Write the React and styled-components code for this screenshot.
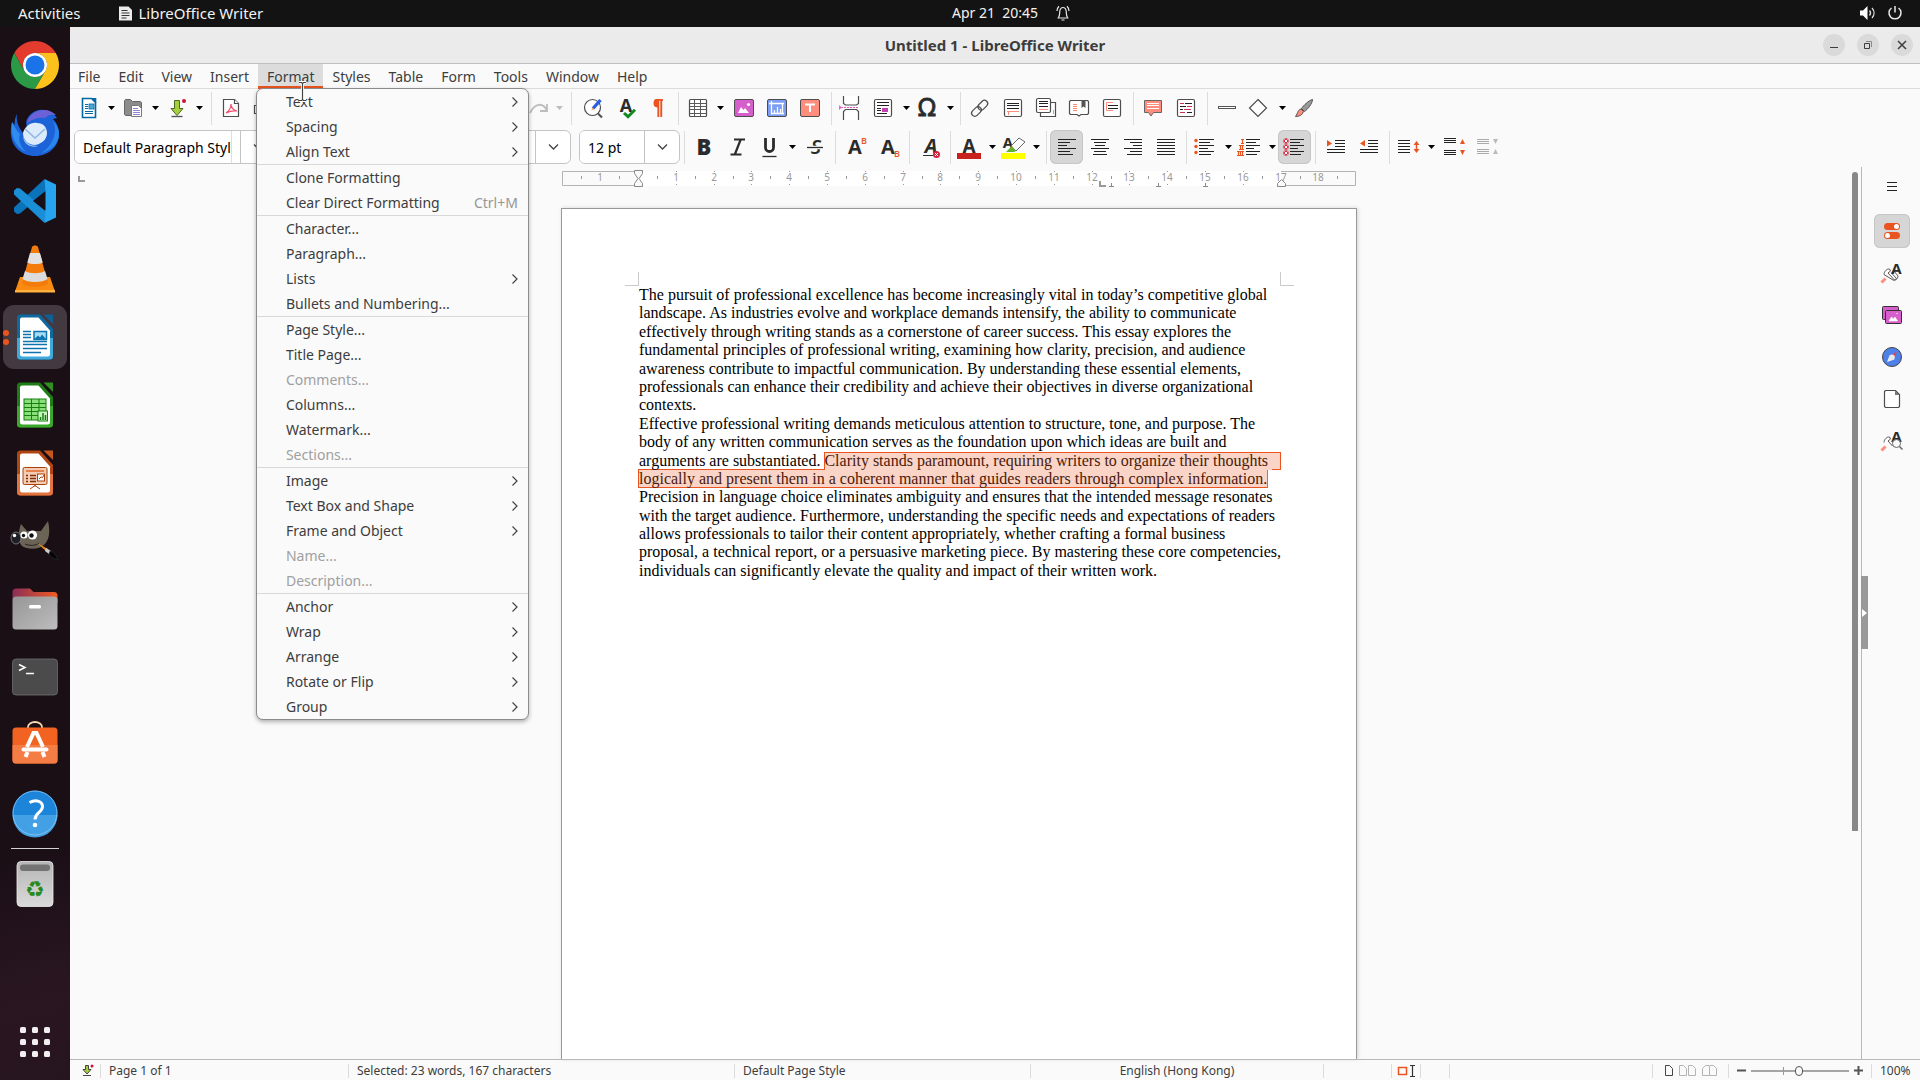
import React from "react";
import styled, { createGlobalStyle, css } from "styled-components";

const UI = `"Noto Sans", "Open Sans", "DejaVu Sans", sans-serif`;
const INK = "#3d3d3d";
const ORANGE = "#e95420";

const Global = createGlobalStyle`
  * { box-sizing: border-box; }
  html, body { margin: 0; height: 100%; }
  body { overflow: hidden; font-family: ${UI}; color: ${INK}; font-size: 14px; }
  button { font: inherit; color: inherit; border: 0; padding: 0; margin: 0; background: none; }
  svg { display: block; flex: none; overflow: visible; }
`;

const Desktop = styled.div`
  height: 100vh;
  display: flex;
  flex-direction: column;
  background: #fafafa;
`;

/* ---------- top panel ---------- */
const Panel = styled.header`
  flex: none;
  height: 27px;
  padding-bottom: 2px;
  display: grid;
  grid-template-columns: calc(50% - 8px) auto 1fr;
  align-items: center;
  background: #131313;
  color: #f2f2f2;
  line-height: 20px;
`;
const PanelGroup = styled.div`
  display: flex;
  align-items: center;
  justify-content: ${(p) => (p.$end ? "flex-end" : "flex-start")};
  gap: ${(p) => p.$gap || 0}px;
  padding: 0 ${(p) => (p.$end ? 18 : 0)}px 0 ${(p) => (p.$start ? 18 : 0)}px;
  font-size: ${(p) => (p.$start ? 15 : 14)}px;
`;
const PanelButton = styled.button`
  display: flex;
  align-items: center;
  gap: 7px;
  white-space: pre;
`;

const Main = styled.div`
  flex: 1;
  min-height: 0;
  display: flex;
`;

/* ---------- dock ---------- */
const Dock = styled.nav`
  flex: none;
  width: 70px;
  display: flex;
  flex-direction: column;
  align-items: center;
  gap: 4px;
  padding: 6px 0;
  background: linear-gradient(165deg, #1b0f16 0%, #1b0f16 78%, #2a1621 92%, #26141e 100%);
`;
const DockButton = styled.button`
  position: relative;
  width: 64px;
  height: 64px;
  display: grid;
  place-items: center;
  border-radius: 11px;
  ${(p) =>
    p.$active &&
    css`
      background: #433940;
      &::before,
      &::after {
        content: "";
        position: absolute;
        left: 0;
        width: 6px;
        height: 6px;
        border-radius: 3px;
        background: ${ORANGE};
      }
      &::before { top: 25px; }
      &::after { top: 34px; }
    `}
`;
const DockRule = styled.div`
  width: 48px;
  height: 1px;
  margin: -1px 0 -1px;
  background: #d5d2d4;
`;
const Spacer = styled.div`
  flex: 1;
`;

/* ---------- window ---------- */
const Window = styled.section`
  flex: 1;
  min-width: 0;
  display: flex;
  flex-direction: column;
`;
const TitleBar = styled.div`
  flex: none;
  height: 37px;
  display: grid;
  grid-template-columns: 1fr auto 1fr;
  align-items: center;
  background: #ebebeb;
  border-bottom: 1px solid #bfbfbf;
`;
const Title = styled.h1`
  grid-column: 2;
  margin: 0;
  font-size: 15px;
  line-height: 20px;
  font-weight: 700;
`;
const WindowButtons = styled.div`
  display: flex;
  justify-content: flex-end;
  gap: 12px;
  padding-right: 7px;
`;
const RoundButton = styled.button`
  width: 22px;
  height: 22px;
  display: grid;
  place-items: center;
  border-radius: 11px;
  background: #dadada;
`;
const MenuBar = styled.nav`
  flex: none;
  height: 25px;
  display: flex;
  gap: 2px;
  border-bottom: 1px solid #dcdcdc;
`;
const MenuHolder = styled.div`
  position: relative;
  height: 25px;
  margin: 0 -1px;
`;
const MenuTitle = styled.button`
  height: ${(p) => (p.$open ? 25 : 24)}px;
  padding: 0 ${(p) => (p.$open ? 9 : 8)}px;
  line-height: 26px;
  display: block;
  ${(p) =>
    p.$open &&
    css`
      background: #dcdcdc;
      box-shadow: inset 0 -3px 0 ${ORANGE};
    `}
`;
const Popup = styled.div`
  position: absolute;
  z-index: 5;
  top: 24px;
  left: -2px;
  width: 273px;
  display: flex;
  flex-direction: column;
  background: #fafafa;
  border: 1px solid #8c8c8c;
  border-radius: 7px;
  box-shadow: 0 2px 4px rgba(0, 0, 0, 0.3);
`;
const PopupItem = styled.button`
  height: 25px;
  display: flex;
  align-items: center;
  justify-content: space-between;
  padding: 0 10px 0 29px;
  line-height: 25px;
  color: ${(p) => (p.disabled ? "#a0a0a0" : INK)};
`;
const Shortcut = styled.span`
  color: #969696;
`;
const PopupRule = styled.div`
  height: 1px;
  background: #d9d9d9;
`;
const Pointer = styled.svg`
  position: absolute;
  z-index: 6;
  left: 40px;
  top: 17px;
`;

const Toolbar = styled.div`
  flex: none;
  height: ${(p) => p.$height}px;
  display: flex;
  align-items: center;
  padding-left: ${(p) => p.$inset}px;
`;
const Tool = styled.button`
  flex: none;
  width: 33px;
  height: 34px;
  padding-left: 4px;
  display: flex;
  align-items: center;
  ${(p) =>
    p.$on &&
    css`
      border-radius: 6px;
      background: #d6d6d6;
      box-shadow: inset 0 0 0 1px #c6c6c6;
    `}
`;
const Drop = styled.button`
  flex: none;
  width: ${(p) => (p.$wide ? 13 : 11)}px;
  height: 34px;
  padding-left: 2px;
  display: flex;
  align-items: center;
  color: ${(p) => (p.disabled ? "#bdbdbd" : "#000")};
`;
const ToolRule = styled.div`
  flex: none;
  width: 1px;
  height: 33px;
  margin: 0 3px 0 4px;
  background: #dcdcdc;
`;
const Combo = styled.div`
  flex: none;
  display: flex;
  width: ${(p) => p.$width}px;
  height: 34px;
  margin-right: ${(p) => p.$after || 0}px;
  background: #fff;
  border: 1px solid #c4c4c4;
  border-radius: 6px;
  overflow: hidden;
`;
const ComboInput = styled.input`
  flex: 1;
  min-width: 0;
  margin-right: ${(p) => p.$gutter || 0}px;
  padding: 0 0 0 8px;
  border: 0;
  border-right: ${(p) => (p.$gutter ? "1px solid #dedede" : "0")};
  outline: 0;
  background: #fff;
  font: 14px ${UI};
  color: #000;
`;
const ComboButton = styled.button`
  flex: none;
  width: 35px;
  display: grid;
  place-items: center;
  border-left: 1px solid #c4c4c4;
`;

/* ---------- document area ---------- */
const Work = styled.div`
  flex: 1;
  min-height: 0;
  display: flex;
`;
const Canvas = styled.main`
  flex: 1;
  min-width: 0;
  display: flex;
  flex-direction: column;
  align-items: center;
`;
const RulerRow = styled.div`
  align-self: stretch;
  flex: none;
  display: grid;
  grid-template-columns: 1fr auto 1fr;
  padding: 4px 0 22px;
`;
const TabCorner = styled.button`
  width: 24px;
  height: 15px;
  padding-left: 8px;
`;
const Page = styled.article`
  flex: 1;
  min-height: 0;
  width: 796px;
  padding: 63px 75px 0 76px;
  background: #fff;
  border: 1px solid #999;
  border-bottom: 0;
  box-shadow: 1px 0 4px rgba(0, 0, 0, 0.16);
  font: 16px "Liberation Serif", "Times New Roman", serif;
  line-height: 1.15;
  color: #000;
`;
const Corners = styled.div`
  display: flex;
  justify-content: space-between;
  margin: 0 -13px;
`;
const Corner = styled.div`
  width: 14px;
  height: 14px;
  border: solid #cbcbcb;
  border-width: ${(p) => (p.$left ? "0 1px 1px 0" : "0 0 1px 1px")};
`;
const Paragraph = styled.p`
  margin: 0;
`;
const Line = styled.span`
  display: flex;
  white-space: pre;
`;
const edgeShadow = {
  top: `inset 0 1px 0 ${ORANGE}`,
  right: `inset -1px 0 0 ${ORANGE}`,
  bottom: `inset 0 -1px 0 ${ORANGE}`,
  left: `inset 1px 0 0 ${ORANGE}`,
};
const edges = (list = "") => list.split(" ").filter(Boolean).map((e) => edgeShadow[e]).join(", ") || "none";
const Run = styled.span`
  padding-left: 1px;
  box-shadow: ${(p) => edges(p.$edges)};
`;
const Marked = styled.span`
  background: #fad4c7;
  color: #4a1a0a;
  box-shadow: ${(p) => edges(p.$edges)};
  padding-left: ${(p) => (p.$start ? 1 : 0)}px;
  flex: ${(p) => (p.$grow ? 1 : "none")};
`;
const Caret = styled.span`
  width: 1px;
  background: #2aa7d8;
`;

const ScrollTrack = styled.div`
  flex: none;
  width: 13px;
  padding: 5px 3px 0 4px;
`;
const ScrollThumb = styled.div`
  height: 74.3%;
  border-radius: 3px 3px 0 0;
  background: #888;
`;
const Sidebar = styled.aside`
  flex: none;
  width: 59px;
  display: flex;
  border-left: 1px solid #b8b8b8;
`;
const Handle = styled.button`
  align-self: flex-start;
  width: 7px;
  height: 73px;
  margin: 409px 0 0 -1px;
  display: grid;
  place-items: center;
  background: #999;
`;
const Deck = styled.div`
  flex: 1;
  display: flex;
  flex-direction: column;
  align-items: center;
  gap: 8px;
  padding: 3px 4px 0 0;
`;
const DeckButton = styled.button`
  width: 36px;
  height: 34px;
  display: grid;
  place-items: center;
  ${(p) =>
    p.$first &&
    css`
      margin-bottom: 2px;
    `}
  ${(p) =>
    p.$on &&
    css`
      border-radius: 6px;
      background: #d6d6d6;
      box-shadow: inset 0 0 0 1px #c6c6c6;
    `}
`;

/* ---------- status bar ---------- */
const Status = styled.footer`
  flex: none;
  height: 21px;
  padding-top: 1px;
  display: flex;
  align-items: center;
  border-top: 1px solid #b8b8b8;
  font-size: 12px;
  line-height: 20px;
`;
const Cell = styled.div`
  flex: ${(p) => (p.$grow ? `${p.$grow} 1 0` : "none")};
  width: ${(p) => (p.$width ? `${p.$width}px` : "auto")};
  height: 14px;
  min-width: 0;
  display: flex;
  align-items: center;
  justify-content: ${(p) => (p.$center ? "center" : "flex-start")};
  gap: ${(p) => p.$gap || 0}px;
  padding-left: ${(p) => (p.$center ? 0 : 8)}px;
  white-space: nowrap;
  & + & { border-left: 1px solid #dcdcdc; }
`;
const Zoom = styled.input`
  appearance: none;
  width: 98px;
  height: 12px;
  margin: 0;
  background: linear-gradient(#999, #999) 32px 50% / 1px 8px no-repeat,
    linear-gradient(#a5a5a5, #a5a5a5) 0 50% / 100% 2px no-repeat;
  &::-webkit-slider-thumb {
    appearance: none;
    width: 8px;
    height: 10px;
    border: 1px solid #555;
    border-radius: 5px;
    background: #fafafa;
  }
`;

/* ---------- toolbar drawings ---------- */
const box = { fill: "#fff", stroke: "#4d4d4d", strokeWidth: 1.2 };
const bars = (rows, color = "#222") =>
  rows.map(([x1, x2, y]) => <path key={`${x1}-${y}`} d={`M${x1} ${y}.5H${x2}`} stroke={color} />);
const letter = { fontFamily: '"Open Sans", sans-serif', fontWeight: 700, fill: "#2b2b2b", textAnchor: "middle" };
const red = "#ff8d7e";

const drawings = {
  newDoc: (
    <g>
      <path d="M5.500 2.500h9l4 4v15h-13z" fill="#fff" stroke="#0369a3" strokeWidth="1.600" />
      <path d="M14 2h5.300v5z" fill="#0369a3" />
      {bars([[8, 11, 8], [8, 11, 10], [8, 11, 12], [8, 16, 15], [8, 16, 17]], "#0369a3")}
      <rect x="12" y="8" width="5" height="5" fill="#4aa8dc" stroke="#0369a3" strokeWidth=".8" />
    </g>
  ),
  open: (
    <g>
      <path d="M3.500 18.500v-14l1-1h5l2 2h8l1 1v12l-1 1h-15z" fill="#8c8c8c" stroke="#666" />
      <path d="M10.500 9.500h7l3 3v8h-10z" fill="#fff" stroke="#777" />
      {bars([[12, 17, 12], [12, 19, 14], [12, 19, 16], [12, 19, 18]], "#8d86d9")}
    </g>
  ),
  save: (
    <g>
      <path d="M9.500 4.500h5v8h3.500l-6 7-6-7h3.500z" fill="#a4cf3f" stroke="#4c6b1f" />
      <path d="M6.500 20.500h11" stroke="#555" strokeWidth="1.400" />
      <circle cx="19" cy="5" r="2" fill="#d0103a" />
    </g>
  ),
  pdf: (
    <g>
      <path d="M4.500 3.500h11l4 4v13h-15z" {...box} />
      <path d="M15.500 3.500v4h4" {...box} />
      <path d="M7 17c3-2 5-5 5-9 0 4 2 6 6 7-4-.5-7 0-11 2z" fill="none" stroke="#f0506e" strokeWidth="1.200" />
    </g>
  ),
  print: <path d="M2.500 9.500h19v8h-19zM6.500 9v-5h11v5M6.500 14.500h11v6h-11z" {...box} />,
  preview: <path d="M4.500 3.500h15v17h-15z" {...box} />,
  cut: <path d="M6 4l11 14M18 4L7 18" {...box} />,
  copy: <path d="M4.500 3.500h11v13h-11zM8.500 7.500h11v13h-11z" {...box} />,
  paste: <path d="M4.500 4.500h15v16h-15z" {...box} />,
  brush: <path d="M4 20L18 5" {...box} />,
  undo: <path d="M4 8v7h7M4 15c4-8 12-8 16 0" fill="none" stroke="#555" strokeWidth="2" />,
  redo: <path d="M22 8v7h-7M22 14.500c-4-8-12-8-17 2.500" fill="none" stroke="#bdbdbd" strokeWidth="1.800" />,
  find: (
    <g transform="translate(2 0)">
      <circle cx="11.500" cy="11.500" r="8" fill="#fff" stroke="#4d4d4d" strokeWidth="1.200" />
      <path d="M17 17.500l4 4" stroke="#555" strokeWidth="2.200" />
      <path d="M12 12.500L19.500 4" stroke="#2b5fe0" strokeWidth="3.400" />
      <path d="M10.500 14.500l.5-3 2.200 1.800z" fill="#f5b25a" />
    </g>
  ),
  spell: (
    <g transform="translate(2 0)">
      <text x="12" y="15.500" fontSize="18" {...letter}>A</text>
      <path d="M10 17l4 3.700 7-7" fill="none" stroke="#118a23" strokeWidth="3" />
    </g>
  ),
  pilcrow: <path d="M9 3h7v1.800h-.8V21h-1.900V4.800H12.300V21h-1.900v-9.500C7.500 11.500 6.500 9.500 6.500 7.300S7.500 3 9 3z" fill={ORANGE} transform="translate(2 0)" />,
  table: (
    <g>
      <rect x="3.500" y="3.500" width="17" height="17" rx="1" {...box} />
      <path d="M3.500 7.500h17M3.500 10.500h17M3.500 13.500h17M3.500 17.500h17M8.500 3.500v17M14.500 3.500v17" stroke="#5a5a5a" fill="none" />
    </g>
  ),
  image: (
    <g>
      <rect x="2.500" y="3.500" width="19" height="17" rx="1.500" fill="#d75fcb" stroke="#4d4d4d" />
      <path d="M6 17l3-6 2.500 3 1.500-2 4 5z" fill="#fff" />
      <circle cx="16.500" cy="8.500" r="1.600" fill="#fff" />
    </g>
  ),
  chart: (
    <g>
      <rect x="2.500" y="3.500" width="19" height="17" rx="1.500" fill="#7c9ff5" stroke="#4d4d4d" />
      <path d="M4 7.500h15M6.500 5v13.500M17.500 7.500v11M6 17.500h13M9.500 17v-3M12.500 17v-6M15.500 17v-4" stroke="#fff" strokeWidth="1.300" fill="none" />
    </g>
  ),
  textBox: (
    <g>
      <rect x="2.500" y="3.500" width="19" height="17" rx="1.500" fill={red} stroke="#4d4d4d" />
      <path d="M7 8.500h10M12 8.500V16" stroke="#fff" strokeWidth="2" />
    </g>
  ),
  pageBreak: (
    <g>
      <path d="M4.500 0v7.500l2 1.500h11l2-1.500V0" {...box} />
      <path d="M4.500 24v-8.500l2-2h11l2 2V24" {...box} />
      <path d="M2 11.500h18" stroke="#e356c4" strokeDasharray="2 1" />
      <path d="M0 9v5l3-2.500z" fill="#e66ac9" />
    </g>
  ),
  field: (
    <g transform="translate(-1 0)">
      <rect x="3.500" y="3.500" width="17" height="17" rx="1.500" {...box} />
      {bars([[6, 18, 6], [6, 18, 9], [6, 10, 12], [6, 10, 14], [6, 16, 17]])}
      <rect x="11" y="12" width="6" height="4" fill="#c443b4" />
    </g>
  ),
  omega: <text x="11" y="20" fontSize="24" {...letter} fontFamily='"DejaVu Sans", sans-serif' fontWeight="400" stroke="#2b2b2b" strokeWidth=".8">Ω</text>,
  link: (
    <g fill="none" stroke="#4d4d4d" strokeWidth="1.200" transform="rotate(-45 12 12)">
      <rect x="1.500" y="8.800" width="11" height="6.400" rx="3.200" />
      <rect x="10.500" y="8.800" width="11" height="6.400" rx="3.200" />
    </g>
  ),
  footnote: (
    <g>
      <rect x="3.500" y="3.500" width="17" height="17" rx="1.500" {...box} />
      {bars([[6, 18, 7], [6, 18, 9], [6, 18, 12]])}
      {bars([[6, 18, 15]], red)}
      <path d="M7.500 16v3" stroke={red} />
    </g>
  ),
  endnote: (
    <g>
      <path d="M6.500 6.500h15v14h-15z" {...box} />
      <rect x="2.500" y="2.500" width="14" height="14" rx="1.500" {...box} />
      {bars([[5, 14, 5], [5, 14, 7], [5, 14, 10]])}
      {bars([[5, 14, 13]], red)}
      <path d="M19.500 14v4" stroke={red} />
    </g>
  ),
  bookmark: (
    <g>
      <path d="M3.500 4.500h17l1 1v12l-1 1h-6.500l-2 1.500-2-1.500H3.500l-1-1v-12z" {...box} />
      <path d="M14.500 4h4v8l-2-1.500-2 1.500z" fill="#555" />
      {bars([[6, 10, 8], [6, 10, 10], [6, 10, 12], [6, 10, 14]], red)}
    </g>
  ),
  crossRef: (
    <g>
      <rect x="3.500" y="3.500" width="17" height="17" rx="1.500" {...box} />
      {bars([[8, 18, 9], [8, 18, 12]])}
      <path d="M13 6.500H6.500v8H13" fill="none" stroke={red} />
    </g>
  ),
  comment: (
    <g>
      <path d="M3.500 4.500h17v12h-8L10 20l-2.500-3.500h-4z" fill={red} stroke="#666" />
      {bars([[6, 18, 7], [6, 18, 9], [6, 18, 12]], "#fff")}
    </g>
  ),
  track: (
    <g>
      <rect x="3.500" y="3.500" width="17" height="17" rx="1.500" {...box} />
      {bars([[11, 18, 7], [6, 12, 10], [6, 9, 13], [13, 18, 16]])}
      {bars([[6, 10, 7], [13, 18, 10], [10, 17, 13], [6, 11, 16]], "#d03050")}
    </g>
  ),
  line: <rect x="3.500" y="10.500" width="17" height="2" fill="#fff" stroke="#555" />,
  diamond: <path d="M10 3.500l8.500 8.500-8.500 8.500L1.500 12z" {...box} />,
  draw: (
    <g>
      <path d="M20.500 3.500c-4 1-9 6-11 9l3 3c3-2 8-8 8-12z" fill="#999" stroke="#555" />
      <path d="M9 13c-3 .5-3 4-5.500 7.500 4 0 7-1.500 8-5z" fill={red} stroke="#555" />
    </g>
  ),
  bold: <text x="12" y="20" fontSize="22" {...letter} fontWeight="800">B</text>,
  italic: <path d="M9 4.500h11M5.500 19.500h11M15.500 5L10 19" stroke="#2b2b2b" strokeWidth="2.200" fill="none" />,
  underline: (
    <g fill="none" stroke="#2b2b2b">
      <path d="M7.500 3v9.500a4 4 0 0 0 8 0V3" strokeWidth="2.800" />
      <path d="M4.500 21.500h14" strokeWidth="1.300" />
    </g>
  ),
  strike: (
    <g>
      <text x="14" y="19" fontSize="20" {...letter} fontStyle="italic" fontWeight="600">S</text>
      <path d="M5 12.500h16" stroke="#fafafa" strokeWidth="3.500" />
      <path d="M5 12.500h16" stroke="#2b2b2b" strokeWidth="1.300" />
    </g>
  ),
  sup: (
    <g>
      <text x="12" y="19" fontSize="20" {...letter}>A</text>
      <text x="21" y="9" fontSize="9" {...letter} fill={ORANGE} fontWeight="600">B</text>
    </g>
  ),
  sub: (
    <g>
      <text x="12" y="19" fontSize="20" {...letter}>A</text>
      <text x="21" y="22" fontSize="9" {...letter} fill={ORANGE} fontWeight="600">B</text>
    </g>
  ),
  clear: (
    <g transform="translate(2 0)">
      <text x="12" y="18" fontSize="20" {...letter} fontStyle="italic">A</text>
      <path d="M4 20.500h10" stroke="#333" />
      <circle cx="17.500" cy="19.500" r="3.500" fill="#d6203f" />
      <path d="M16 18l3 3M19 18l-3 3" stroke="#fff" />
    </g>
  ),
  fontColor: (
    <g>
      <text x="11" y="17.500" fontSize="19" {...letter}>A</text>
      <rect x="-1" y="18" width="24" height="6" fill="#c9211e" />
    </g>
  ),
  highlight: (
    <g>
      <text x="6" y="13" fontSize="15" {...letter}>A</text>
      <path d="M9 11l8-8 6 4-9 9z" fill="#fff" stroke="#666" />
      <path d="M4 17l6-6 4 5-2 1z" fill="#63b22c" />
      <rect x="-1" y="18" width="24" height="6" fill="#ffff00" />
    </g>
  ),
  left: bars([[4, 22, 4], [4, 16, 7], [4, 13, 10], [4, 22, 13], [4, 16, 16], [4, 19, 19]]),
  center: bars([[4, 22, 4], [7, 19, 7], [8, 18, 10], [4, 22, 13], [7, 19, 16], [6, 20, 19]]),
  right: bars([[4, 22, 4], [10, 22, 7], [13, 22, 10], [4, 22, 13], [10, 22, 16], [7, 22, 19]]),
  justify: bars([[4, 22, 4], [4, 22, 7], [4, 22, 10], [4, 22, 13], [4, 22, 16], [4, 22, 19]]),
  bullets: (
    <g>
      <g fill={ORANGE}>
        <circle cx="2" cy="5.500" r="1.700" /><circle cx="2" cy="11.500" r="1.700" /><circle cx="2" cy="17.500" r="1.700" />
      </g>
      {bars([[5, 20, 4], [5, 16, 7], [5, 20, 10], [5, 14, 13], [5, 20, 16], [5, 17, 19]])}
    </g>
  ),
  numbers: (
    <g transform="translate(-1 0)">
      <path d="M4 4.500h3M5.500 4.500v4M4 8.500h3M2 10.500h5M3.500 10.500v4M5.500 10.500v4M2 14.500h5M0 16.500h7M1.500 16.500v4M3.500 16.500v4M5.500 16.500v4M0 20.500h7" stroke={ORANGE} strokeWidth="1.200" />
      {bars([[9, 23, 4], [9, 19, 7], [9, 23, 10], [9, 17, 13], [9, 23, 16], [9, 20, 19]])}
    </g>
  ),
  noList: (
    <g>
      {[6, 12, 18].map((y) => (
        <g key={y}>
          <circle cx="4" cy={y} r="2.700" fill="#d6304a" />
          <path d={`M2.500 ${y - 1.5}l3 3m0-3l-3 3`} stroke="#fff" />
        </g>
      ))}
      {bars([[8, 22, 4], [8, 18, 7], [8, 22, 10], [8, 16, 13], [8, 22, 16], [8, 19, 19]])}
    </g>
  ),
  indent: (
    <g transform="translate(1 0)">
      <path d="M3 5l5 3.500-5 3z" fill={ORANGE} />
      {bars([[11, 21, 5], [11, 21, 8], [11, 21, 11], [3, 21, 14], [3, 21, 17]])}
    </g>
  ),
  outdent: (
    <g transform="translate(1 0)">
      <path d="M8 5L3 8.500l5 3z" fill={ORANGE} />
      {bars([[11, 21, 5], [11, 21, 8], [11, 21, 11], [3, 21, 14], [3, 21, 17]])}
    </g>
  ),
  lineSpacing: (
    <g>
      {bars([[1, 13, 5], [1, 13, 8], [1, 13, 11], [1, 13, 14], [1, 13, 17]])}
      <path d="M19.500 8v8" stroke={ORANGE} strokeWidth="1.500" />
      <path d="M19.500 6l-3 4h6zM19.500 18l-3-4h6z" fill={ORANGE} />
    </g>
  ),
  moreSpace: (
    <g>
      {bars([[3, 15, 3], [3, 15, 5], [3, 15, 7], [3, 15, 15], [3, 15, 17], [3, 15, 19]])}
      <path d="M21.500 4l-2.500 5h5zM21.500 20l-2.500-5h5z" fill={ORANGE} />
    </g>
  ),
  lessSpace: (
    <g>
      {bars([[3, 15, 4], [3, 15, 6], [3, 15, 8], [3, 15, 14], [3, 15, 16], [3, 15, 18]], "#aaa")}
      <path d="M21.500 9L19 4h5zM21.500 14l-2.500 5h5z" fill="#bbb" />
    </g>
  ),
  burger: bars([[7, 17, 7], [7, 17, 11], [7, 17, 15]]),
  props: (
    <g>
      <rect x="4" y="4" width="16" height="7" rx="3.500" fill={ORANGE} />
      <rect x="4" y="13" width="16" height="7" rx="3.500" fill={ORANGE} />
      <circle cx="16.500" cy="7.500" r="2.500" fill="#fff" />
      <circle cx="7.500" cy="16.500" r="2.500" fill="#fff" />
    </g>
  ),
  styles: (
    <g>
      <path d="M1.500 21.500l4-4" stroke={red} strokeWidth="3" />
      <path d="M4 13.500c0-3 3-6 5.500-5.500l1 2-2.500 2 6.500 7 2-1.500-5-5.500 2-2.500 4.500 5.500c0 3-3 5-5 4z" fill="#fff" stroke="#555" />
      <text x="16.500" y="12.500" fontSize="15" {...letter}>A</text>
    </g>
  ),
  gallery: (
    <g stroke="#333">
      <rect x="2.500" y="3.500" width="16" height="13" rx="1" fill="#d75fcb" />
      <rect x="5.500" y="7.500" width="16" height="13" rx="1" fill="#d75fcb" />
      <path d="M9 18l2.500-4 2 2 1.500-2 2.500 4zM16 10.500h2" fill="#fff" stroke="#fff" strokeWidth=".6" />
    </g>
  ),
  navigator: (
    <g>
      <circle cx="12" cy="12" r="9.500" fill="#4d80e8" stroke="#444" />
      <path d="M7 17l2.500-6.500 5 4z" fill="#eee" />
      <path d="M17 7l-7 3.500 3.500 4z" fill="#e0405a" />
      <circle cx="12" cy="12.200" r="2.800" fill="#e4e8ee" />
    </g>
  ),
  page: (
    <g>
      <path d="M4.500 4.500l1-1h10l4 4v12l-1 1h-13l-1-1z" {...box} />
      <path d="M15 3.500v4.500h4.500z" fill="#777" />
    </g>
  ),
  inspect: (
    <g>
      <path d="M1.500 21.500l4-4" stroke={red} strokeWidth="3" />
      <path d="M4 13.500c0-3 3-6 5.500-5.500l1 2-2.500 2 4.500 5" fill="#fff" stroke="#555" />
      <text x="16.500" y="12.500" fontSize="15" {...letter}>A</text>
      <circle cx="16.500" cy="14.500" r="4" fill="#fafafa" stroke="#666" />
      <path d="M19.500 17.500l3 3" stroke="#666" strokeWidth="1.400" />
    </g>
  ),
};

const Icon = ({ name }) => (
  <svg width="24" height="24" viewBox="0 0 24 24" fill="none" aria-hidden="true">
    {drawings[name]}
  </svg>
);

const Tools = ({ items }) =>
  items.map((item, i) => {
    if (item === "|") return <ToolRule key={i} />;
    const [name, drop, state] = item.split(":");
    const off = state === "off";
    return (
      <React.Fragment key={i}>
        <Tool aria-label={name} $on={state === "on"} disabled={off}>
          <Icon name={name} />
        </Tool>
        {drop && (
          <Drop aria-label={`${name} options`} $wide={drop === "wide"} disabled={off}>
            <svg width="7" height="4" viewBox="0 0 7 4"><path d="M0 0h7L3.500 4z" fill="currentColor" /></svg>
          </Drop>
        )}
      </React.Fragment>
    );
  });

const ComboBox = ({ label, value, width, after, gutter }) => (
  <Combo $width={width} $after={after}>
    <ComboInput aria-label={label} defaultValue={value} $gutter={gutter} />
    <ComboButton aria-label={`${label} list`}>
      <svg width="11" height="6" viewBox="0 0 11 6" fill="none"><path d="M1 .5l4.500 4.500L10 .5" stroke="#444" strokeWidth="1.300" /></svg>
    </ComboButton>
  </Combo>
);

/* ---------- dock drawings ---------- */
const Office = ({ dark, mid, light, children }) => (
  <g>
    <path d="M9 1.500h20L42 16v27a3.500 3.500 0 0 1-3.500 3.500h-29A3.500 3.500 0 0 1 6 43V5a3.500 3.500 0 0 1 3-3.500z" fill={dark} />
    <path d="M6 25h36v18a3.500 3.500 0 0 1-3.500 3.500h-29A3.500 3.500 0 0 1 6 43z" fill={mid} />
    <path d="M32.500 1.500H42V11z" fill={light} />
    <path d="M11 4.500h16.500L39 17.500V41a2.500 2.500 0 0 1-2.500 2.500h-25A2.500 2.500 0 0 1 9 41V6.500a2 2 0 0 1 2-2z" fill="#fff" />
    {children}
  </g>
);

const dockDrawings = {
  Chrome: (
    <g>
      <path d="M24 12h20.780A24 24 0 0 0 3.220 12l10.390 18A12 12 0 0 1 24 12z" fill="#e33b2e" />
      <path d="M34.390 30L24 48A24 24 0 0 1 3.220 12l10.390 18a12 12 0 0 0 20.780 0z" fill="#2b9a46" />
      <path d="M44.780 12A24 24 0 0 1 24 48l10.390-18A12 12 0 0 0 24 12z" fill="#fcc21b" />
      <circle cx="24" cy="24" r="12" fill="#fff" />
      <circle cx="24" cy="24" r="9.500" fill="#1a73e8" />
    </g>
  ),
  Thunderbird: (
    <g>
      <path d="M6 5C3 11 4 14 3.500 16L1 13c-1 4-1.500 9-1 13 1 12 11 21 24 21 14 0 24-10 24-22 0-6-2-11-6-15l4-1C40-1 26-2 19 6c-4 4-4.500 8-3 12l-4 6C7 18 5 11 6 5z" fill="#1b63d6" />
      <path d="M16 14c2-8 9-13 17-13 5 0 9 2 12 5-6-1-8 0-11 3-5-1-11 0-18 5z" fill="#6d61d8" />
      <path d="M1 13c-2 12 2 24 14 30C9 37 7 31 9 25c-4-4-6-8-8-12z" fill="#2f8df0" />
      <path d="M42 12c5 9 1 24-12 32 12-3 18-11 18-19 0-5-2-9-6-13z" fill="#2a86ee" />
      <path d="M12 24c2-7 8-11 14-10 6 0 10 4 10 10s-5 11-12 12c-7 0-12-5-12-12z" fill="#dcebfb" />
      <path d="M14 20l10 9 10-9" fill="none" stroke="#8fb5e2" strokeWidth="1.500" />
      <path d="M12 26c1 8 8 11 15 11-5 2-15 0-15-11z" fill="#9fc8f6" />
    </g>
  ),
  Code: (
    <g>
      <path d="M33.500 2L3 30.500v4L6 37l3-.5L36 14z" fill="#0a73ba" />
      <path d="M33.500 46L3 17.500v-4L6 11l3 .5L36 34z" fill="#1a8fd8" />
      <path d="M34.500 14v20L22 24z" fill="#1b0f16" />
      <path d="M33.500 2L45 7.500v33L33.500 46l1-12V14z" fill="#27a4ee" />
    </g>
  ),
  VLC: (
    <g>
      <path d="M9 32h30l5 14.500H4z" fill="#f98b12" />
      <path d="M4 45h40v2.500H4z" fill="#ffb23e" />
      <path d="M11 38c2 5 24 5 26 0L27 2c-1-2-5-2-6 0z" fill="#f47c0c" />
      <path d="M19 8h10l2.700 9.500c-3 2-12.400 2-15.400 0z" fill="#e2e2e2" />
      <path d="M14 26c5 3 15 3 20 0l2.500 8c-5 4-20 4-25 0z" fill="#dcdcdc" />
    </g>
  ),
  Writer: (
    <Office dark="#0d69a0" mid="#3fa9dc" light="#0f5f92">
      <g stroke="#0d74b0" strokeWidth="1.500">
        <path d="M12 18.500h8M12 21.500h8M12 24.500h8M12 28.500h24M12 31.500h24M12 35.500h24M12 39.500h18" />
        <rect x="23" y="18.500" width="12.500" height="8" fill="#a6dcf5" />
      </g>
      <path d="M23 26.500l4-4 2 2 2-3 4.500 5z" fill="#0d74b0" />
    </Office>
  ),
  Calc: (
    <Office dark="#1c7d14" mid="#3aa82a" light="#2f8f1f">
      <rect x="13" y="18" width="22" height="21" fill="#8ade7a" stroke="#15800b" />
      <path d="M13 22.500h22M13 26.500h22M13 30.500h22M13 34.500h22M20.500 18v21M28 18v21" stroke="#15800b" />
      <rect x="27" y="30" width="9.500" height="10" fill="#c9f2c0" stroke="#15800b" />
      <path d="M29.500 39v-3M32 39v-7M34.500 39v-5" stroke="#15800b" strokeWidth="1.500" />
    </Office>
  ),
  Impress: (
    <Office dark="#b04712" mid="#e27440" light="#c4581f">
      <rect x="12" y="18.500" width="24" height="17" rx="1.500" fill="#f5cdb5" stroke="#a8410c" />
      <path d="M15 22h18" stroke="#e0662a" strokeWidth="1.500" />
      <path d="M15 26.500h2M15 29.500h2M15 32.500h2M19 26.500h6M19 29.500h6M19 32.500h6" stroke="#7d2f08" strokeWidth="1.500" />
      <rect x="26.500" y="25" width="7" height="7" fill="#fff" stroke="#a8410c" />
      <path d="M28 30l2-2 1.500.5L33 26M24 35.500v2M24 36.500l-5 3.500M24 36.500l5 3.500" stroke="#a8410c" fill="none" />
    </Office>
  ),
  GIMP: (
    <g>
      <path d="M10 7l6 7h14l7-10c2 9 2 17-3 23-6 6-17 6-23 2-4-4-4-14-1-22z" fill="#6b6355" />
      <ellipse cx="5" cy="21" rx="5" ry="6" fill="#1d2024" stroke="#888" strokeWidth=".8" />
      <circle cx="3.500" cy="18.500" r="1.700" fill="#fff" />
      <circle cx="13" cy="18" r="3.600" fill="#fff" /><circle cx="21.500" cy="18" r="4.600" fill="#fff" />
      <circle cx="12.500" cy="18.500" r="1.700" fill="#111" /><circle cx="20.500" cy="18.500" r="2.200" fill="#111" />
      <path d="M14 27c5 2 10 2 14-1" stroke="#222" fill="none" />
      <path d="M26 26l11 6-1.500 2.500z" fill="#e88a20" />
      <path d="M35 31l5 3-2 3-4-3z" fill="#ccc" />
      <path d="M39 34c4 1 6 4 8 9-4-1-8-3-9-6z" fill="#050505" stroke="#333" strokeWidth=".6" />
    </g>
  ),
  Files: (
    <g>
      <path d="M1.500 14V7A3.500 3.500 0 0 1 5 3.500h14l3.500 3.500H43a3.500 3.500 0 0 1 3.500 3.500V18z" fill="url(#folder)" />
      <rect x="1.500" y="11.500" width="45" height="33" rx="3.500" fill="url(#grey)" />
      <rect x="18" y="20" width="12" height="3.500" rx="1.500" fill="#fff" />
    </g>
  ),
  Terminal: (
    <g>
      <rect x="1.500" y="6" width="45" height="36" rx="3.500" fill="#4b4b4b" stroke="#6e6e6e" strokeWidth=".8" />
      <path d="M8 11.500l6 3-6 3" fill="none" stroke="#fff" strokeWidth="1.500" />
      <path d="M15 20.500h8" stroke="#fff" strokeWidth="1.500" />
    </g>
  ),
  Software: (
    <g>
      <path d="M17 8.500V6a7 5 0 0 1 14 0v2.500" fill="none" stroke="#f6d7b0" strokeWidth="1.800" />
      <rect x="1.500" y="6.500" width="45" height="36" rx="3.500" fill="#f26322" />
      <path d="M1.500 24h45v15a3.500 3.500 0 0 1-3.500 3.500H5A3.500 3.500 0 0 1 1.500 39z" fill="#f47c45" />
      <path d="M16 26l6.500-14h3L32 26M14.500 36l2-5M33.500 36l-2-5" stroke="#fff" strokeWidth="4" fill="none" />
      <rect x="10.500" y="26.500" width="27" height="4" rx="2" fill="#fff" />
    </g>
  ),
  Help: (
    <g>
      <circle cx="24" cy="24" r="22.500" fill="#1c85da" />
      <path d="M1.500 26a22.500 22.500 0 0 0 45 0z" fill="#43a0e4" />
      <circle cx="24" cy="24" r="22" fill="none" stroke="#8cc8f2" strokeWidth=".8" />
      <path d="M18.500 13.500c7-3.500 13-1 13 4 0 6-7.500 6-7.500 13" fill="none" stroke="#fff" strokeWidth="3" />
      <circle cx="24" cy="36" r="2.300" fill="#fff" />
    </g>
  ),
  Trash: (
    <g>
      <rect x="6" y="1.500" width="36" height="45" rx="4" fill="url(#grey2)" stroke="#eee" strokeWidth=".8" />
      <rect x="9" y="4.500" width="30" height="6.500" rx="3" fill="#737373" />
      <text x="24" y="37" fontSize="22" textAnchor="middle" fontFamily='"DejaVu Sans", sans-serif' fill="#268a1f">♻</text>
    </g>
  ),
  Apps: (
    <g fill="#f1efef">
      {[9, 21, 33].map((x) => [9, 21, 33].map((y) => <rect key={`${x}${y}`} x={x} y={y} width="6" height="6" rx="1.500" />))}
    </g>
  ),
};

const DockIcon = ({ name }) => (
  <svg width="48" height="48" viewBox="0 0 48 48" aria-hidden="true">
    <defs>
      <linearGradient id="folder"><stop stopColor="#8a2d57" /><stop offset="1" stopColor="#f25c22" /></linearGradient>
      <linearGradient id="grey" x2="1" y2="1"><stop stopColor="#969696" /><stop offset="1" stopColor="#bdbdbd" /></linearGradient>
      <linearGradient id="grey2" x2="0" y2="1"><stop stopColor="#b5b5b5" /><stop offset="1" stopColor="#dadada" /></linearGradient>
    </defs>
    {dockDrawings[name]}
  </svg>
);

const dockApps = ["Chrome", "Thunderbird", "Code", "VLC", "Writer", "Calc", "Impress", "GIMP", "Files", "Terminal", "Software", "Help"];

/* ---------- content ---------- */
const menusBefore = ["File", "Edit", "View", "Insert"];
const menusAfter = ["Styles", "Table", "Form", "Tools", "Window", "Help"];

const formatMenu = [
  [["Text", ">"], ["Spacing", ">"], ["Align Text", ">"]],
  [["Clone Formatting"], ["Clear Direct Formatting", "Ctrl+M"]],
  [["Character..."], ["Paragraph..."], ["Lists", ">"], ["Bullets and Numbering..."]],
  [["Page Style..."], ["Title Page..."], ["Comments...", "off"], ["Columns..."], ["Watermark..."], ["Sections...", "off"]],
  [["Image", ">"], ["Text Box and Shape", ">"], ["Frame and Object", ">"], ["Name...", "off"], ["Description...", "off"]],
  [["Anchor", ">"], ["Wrap", ">"], ["Arrange", ">"], ["Rotate or Flip", ">"], ["Group", ">"]],
];

const standardTools = [
  "newDoc:drop", "open:drop", "save:wide", "|", "pdf", "print", "preview", "|", "cut", "copy", "paste:wide", "brush", "|",
  "undo:wide", "redo:wide:off", "|", "find", "spell", "pilcrow", "|", "table:wide", "image", "chart", "textBox", "|",
  "pageBreak", "field:drop", "omega:drop", "|", "link", "footnote", "endnote", "bookmark", "crossRef", "|", "comment",
  "track", "|", "line", "diamond:drop", "draw",
];
const formatTools = [
  "|", "bold", "italic", "underline:drop", "strike", "|", "sup", "sub", "|", "clear", "|", "fontColor:drop", "highlight:drop",
  "|", "left::on", "center", "right", "justify", "|", "bullets:drop", "numbers:drop", "noList::on", "|", "indent", "outdent",
  "|", "lineSpacing:drop", "moreSpace", "lessSpace::off",
];
const deckTools = ["props", "styles", "gallery", "navigator", "page", "inspect"];

const firstParagraph = [
  "The pursuit of professional excellence has become increasingly vital in today’s competitive global",
  "landscape. As industries evolve and workplace demands intensify, the ability to communicate",
  "effectively through writing stands as a cornerstone of career success. This essay explores the",
  "fundamental principles of professional writing, examining how clarity, precision, and audience",
  "awareness contribute to impactful communication. By understanding these essential elements,",
  "professionals can enhance their credibility and achieve their objectives in diverse organizational",
  "contexts.",
];
const secondStart = [
  "Effective professional writing demands meticulous attention to structure, tone, and purpose. The",
  "body of any written communication serves as the foundation upon which ideas are built and",
];
const secondEnd = [
  "Precision in language choice eliminates ambiguity and ensures that the intended message resonates",
  "with the target audience. Furthermore, understanding the specific needs and expectations of readers",
  "allows professionals to tailor their content appropriately, whether crafting a formal business",
  "proposal, a technical report, or a persuasive marketing piece. By mastering these core competencies,",
  "individuals can significantly elevate the quality and impact of their written work.",
];
const Lines = ({ rows }) => rows.map((row) => <Line key={row}><Run>{row}</Run></Line>);

const CM = 37.8;
const ZERO = 76;
const Ruler = () => {
  const at = (cm) => Math.round(ZERO + cm * CM);
  const whole = Array.from({ length: 18 }, (_, i) => i + 1);
  const halves = Array.from({ length: 21 }, (_, i) => i - 1.5);
  return (
    <svg width="794" height="15" viewBox="0 0 794 15" fontFamily={UI} fontSize="10" textAnchor="middle" aria-label="Ruler">
      <rect x={ZERO} width={at(17) - ZERO} height="15" fill="#fff" />
      <path d={`M${ZERO} .5H.5v14H${ZERO}M${at(17)} .5H793.500v14H${at(17)}`} fill="none" stroke="#b3b3b3" />
      {halves.filter((c) => c < 18.8).map((c) => <path key={c} d={`M${at(c)}.5 5v3`} stroke="#999" />)}
      {whole.filter((c) => c < 17).map((c) => <path key={c} d={`M${at(c)}.5 0v1M${at(c)}.5 13v1`} stroke="#999" />)}
      <g fill="#999">
        <text x={at(-1)} y="10">1</text>
        {whole.map((c) => <text key={c} x={at(c)} y="10">{c}</text>)}
      </g>
      <path d="M72.500-.5h8v3L77 7.500l3.500 5v3h-8v-3L76 7.500l-3.500-5z" fill="#fafafa" stroke="#888" />
      <path d={`M${at(17) - 4}.5 15.500v-3l4-4 4 4v3z`} fill="#fafafa" stroke="#888" />
      <path d="M538 10v5h6" fill="none" stroke="#999" strokeWidth="2" />
      {[549, 596, 643].map((x) => <path key={x} d={`M${x}.5 12v3M${x - 2} 15.500h5`} stroke="#888" />)}
    </svg>
  );
};

const PageGlyph = ({ count, faint }) => (
  <svg width={count * 9} height="11" viewBox={`0 0 ${count * 9} 11`} fill="none" stroke={faint ? "#b5b5b5" : "#444"}>
    {Array.from({ length: count }, (_, i) => (
      <path key={i} d={`M${i * 9 + 1}.5 .5h4l3 3v7h-7z`} />
    ))}
  </svg>
);

const BookGlyph = () => (
  <svg width="17" height="11" viewBox="0 0 17 11" fill="none" stroke="#b5b5b5">
    <path d="M8.500 1v9.500H1.500v-7l3-3h3.500l.5.5.5-.5h3.500l3 3v7H8.500" />
  </svg>
);

export default function App() {
  return (
    <Desktop>
      <Global />
      <Panel>
        <PanelGroup $start $gap={38}>
          <PanelButton>Activities</PanelButton>
          <PanelButton>
            <svg width="13" height="16" viewBox="0 0 13 16">
              <path d="M0 1.500h9.500L13 5v10.500H0z" fill="#ececec" />
              <path d="M2.500 5.500h6M2.500 8h8M2.500 10.500h8M2.500 13h5" stroke="#333" />
            </svg>
            LibreOffice Writer
          </PanelButton>
        </PanelGroup>
        <PanelGroup $gap={18}>
          <PanelButton>Apr 21  20:45</PanelButton>
          <svg width="14" height="16" viewBox="0 0 14 16" fill="none" stroke="#e8e8e8" strokeWidth="1.200">
            <path d="M1.500 13h11M2.500 12.500c1.500-2 1-4 1.300-6.500C4.200 3.500 5.500 2.500 7 2.500s2.800 1 3.200 3.500c.3 2.500-.2 4.500 1.300 6.500M1 6c0-2 .7-3.500 2-4.700M13 6c0-2-.7-3.500-2-4.700M5.500 15h3" />
          </svg>
        </PanelGroup>
        <PanelGroup $end $gap={13}>
          <svg width="15" height="14" viewBox="0 0 15 14">
            <path d="M0 4.500h3L7.500 0v14L3 9.500H0z" fill="#fff" />
            <path d="M9.500 4.500c1.300 1.500 1.300 3.500 0 5M12 2c2.700 3 2.700 7 0 10" stroke="#ddd" strokeWidth="1.300" fill="none" />
          </svg>
          <svg width="14" height="14" viewBox="0 0 14 14" fill="none" stroke="#e8e8e8" strokeWidth="1.500">
            <path d="M7 0v6.500M3.500 2a6 6 0 1 0 7 0" />
          </svg>
        </PanelGroup>
      </Panel>

      <Main>
        <Dock aria-label="Dock">
          {dockApps.map((name) => (
            <DockButton key={name} aria-label={name} $active={name === "Writer"}>
              <DockIcon name={name} />
            </DockButton>
          ))}
          <DockRule />
          <DockButton aria-label="Trash"><DockIcon name="Trash" /></DockButton>
          <Spacer />
          <DockButton aria-label="Show applications"><DockIcon name="Apps" /></DockButton>
        </Dock>

        <Window>
          <TitleBar>
            <Title>Untitled 1 - LibreOffice Writer</Title>
            <WindowButtons>
              <RoundButton aria-label="Minimize"><svg width="8" height="8"><path d="M0 6.500h8" stroke={INK} /></svg></RoundButton>
              <RoundButton aria-label="Restore">
                <svg width="8" height="8" fill="none"><path d="M2 .5h5.500V6" stroke="#888" /><path d="M.5 2.500h5v5h-5z" stroke={INK} /></svg>
              </RoundButton>
              <RoundButton aria-label="Close"><svg width="8" height="8"><path d="M0 0l8 8M8 0L0 8" stroke={INK} strokeWidth="1.500" /></svg></RoundButton>
            </WindowButtons>
          </TitleBar>

          <MenuBar>
            {menusBefore.map((m) => <MenuTitle key={m}>{m}</MenuTitle>)}
            <MenuHolder>
              <MenuTitle $open>Format</MenuTitle>
              <Popup role="menu">
                {formatMenu.map((group, g) => (
                  <React.Fragment key={g}>
                    {g > 0 && <PopupRule />}
                    {group.map(([label, extra]) => (
                      <PopupItem key={label} role="menuitem" disabled={extra === "off"}>
                        {label}
                        {extra === ">" && <svg width="6" height="10" fill="none"><path d="M.5 .5l4.500 4.500-4.500 4.500" stroke="#444" strokeWidth="1.200" /></svg>}
                        {extra === "Ctrl+M" && <Shortcut>{extra}</Shortcut>}
                      </PopupItem>
                    ))}
                  </React.Fragment>
                ))}
              </Popup>
              <Pointer width="9" height="21" viewBox="0 0 9 21" fill="none">
                <path d="M1 1.500h2.500l1 1 1-1H8M4.500 2v17M1 19.500h2.500l1-1 1 1H8" stroke="#fff" strokeWidth="3" />
                <path d="M1 1.500h2.500l1 1 1-1H8M4.500 2v17M1 19.500h2.500l1-1 1 1H8" stroke="#444" strokeWidth="1.200" />
              </Pointer>
            </MenuHolder>
            {menusAfter.map((m) => <MenuTitle key={m}>{m}</MenuTitle>)}
          </MenuBar>

          <Toolbar $height={38} $inset={3}>
            <Tools items={standardTools} />
          </Toolbar>
          <Toolbar $height={40} $inset={4}>
            <ComboBox label="Paragraph style" value="Default Paragraph Style" width={202} gutter={8} />
            <Tools items={["paste", "brush", "|"]} />
            <ComboBox label="Font name" value="Liberation Serif" width={221} after={8} />
            <ComboBox label="Font size" value="12 pt" width={101} />
            <Tools items={formatTools} />
          </Toolbar>

          <Work>
            <Canvas>
              <RulerRow>
                <TabCorner aria-label="Tab type">
                  <svg width="7" height="6"><path d="M1 0v5h6" fill="none" stroke="#999" strokeWidth="2" /></svg>
                </TabCorner>
                <Ruler />
              </RulerRow>
              <Page>
                <Corners><Corner $left /><Corner /></Corners>
                <Paragraph><Lines rows={firstParagraph} /></Paragraph>
                <Paragraph>
                  <Lines rows={secondStart} />
                  <Line>
                    <Run $edges="bottom">arguments are substantiated. </Run>
                    <Marked $edges="top left">Clarity stands paramount, requiring writers to organize their thoughts </Marked>
                    <Marked $edges="top right bottom" $grow />
                  </Line>
                  <Line>
                    <Marked $edges="bottom left" $start>logically and present them in a coherent manner that guides readers through complex information.</Marked>
                    <Caret />
                  </Line>
                  <Lines rows={secondEnd} />
                </Paragraph>
              </Page>
            </Canvas>
            <ScrollTrack><ScrollThumb /></ScrollTrack>
            <Sidebar>
              <Handle aria-label="Hide sidebar"><svg width="5" height="8"><path d="M0 0l5 4-5 4z" fill="#fff" /></svg></Handle>
              <Deck>
                <DeckButton $first aria-label="Sidebar settings"><Icon name="burger" /></DeckButton>
                {deckTools.map((name) => (
                  <DeckButton key={name} aria-label={name} $on={name === "props"}><Icon name={name} /></DeckButton>
                ))}
              </Deck>
            </Sidebar>
          </Work>

          <Status>
            <Cell $width={30} $center>
              <svg width="14" height="13" viewBox="-3 0 14 13">
                <path d="M4.500 1.500h3v4H10L6 10 2 5.500h2.500z" fill="#a4cf3f" stroke="#444" />
                <path d="M2 11.500h8" stroke="#444" />
                <circle cx="11" cy="2" r="1.500" fill="#d0103a" />
              </svg>
            </Cell>
            <Cell $width={248}>Page 1 of 1</Cell>
            <Cell $grow={377}>Selected: 23 words, 167 characters</Cell>
            <Cell $grow={287}>Default Page Style</Cell>
            <Cell $grow={292} $center>English (Hong Kong)</Cell>
            <Cell $width={68} />
            <Cell $width={29} $center>
              <svg width="19" height="12" fill="none">
                <path d="M1.500 2.500h8v7h-8z" stroke={ORANGE} strokeWidth="1.500" />
                <path d="M13 .5h5M15.500 .5v11M13 11.500h5" stroke="#333" strokeWidth="1.200" />
              </svg>
            </Cell>
            <Cell $width={29} />
            <Cell $grow={194} />
            <Cell $width={76} $center $gap={5}>
              <PageGlyph count={1} />
              <PageGlyph count={2} faint />
              <BookGlyph />
            </Cell>
            <Cell $width={143} $center $gap={5}>
              <button aria-label="Zoom out"><svg width="9" height="9"><path d="M0 4.500h9" stroke="#555" strokeWidth="2" /></svg></button>
              <Zoom type="range" aria-label="Zoom" min="0" max="100" defaultValue="49" />
              <button aria-label="Zoom in"><svg width="9" height="9"><path d="M0 4.500h9M4.500 0v9" stroke="#555" strokeWidth="2" /></svg></button>
            </Cell>
            <Cell $width={49}>100%</Cell>
          </Status>
        </Window>
      </Main>
    </Desktop>
  );
}
